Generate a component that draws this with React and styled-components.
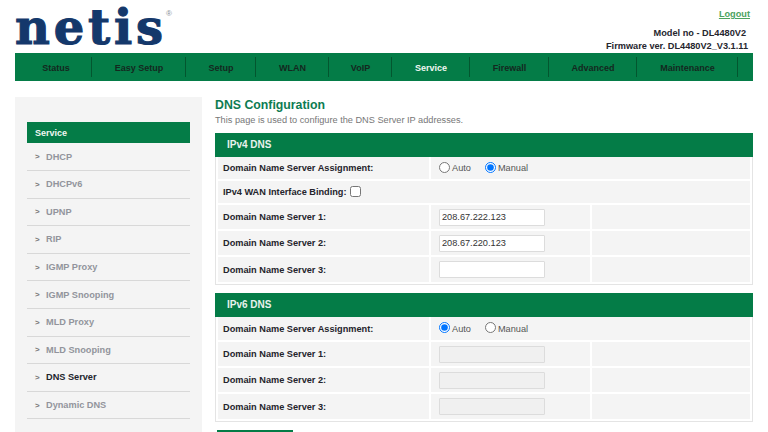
import React from 'react'
import styled, { createGlobalStyle } from 'styled-components'

const GlobalStyle = createGlobalStyle`
  html, body {
    margin: 0;
    height: 432px;
    overflow: hidden;
    background: #fff;
    font-family: 'Liberation Sans', Arial, sans-serif;
  }
`
const Page = styled.div`
  width: 768px;
  height: 432px;
  overflow: hidden;
  box-sizing: border-box;
  padding: 0 15px;
`
const Header = styled.header`
  height: 53px;
  display: flex;
  justify-content: space-between;
`
const Logo = styled.div`
  display: flex;
  align-items: flex-start;
  height: 53px;
`
const LogoText = styled.span`
  font-family: 'DejaVu Serif', serif;
  font-weight: 700;
  font-size: 48px;
  line-height: 53px;
  padding-top: 1px;
  letter-spacing: 3.8px;
  color: #14386b;
  -webkit-text-stroke: 1.1px #14386b;
`
const LogoMark = styled.span`
  font-size: 8px;
  line-height: 9px;
  color: #8a8f98;
  margin: 9px 0 0 -1px;
`
const HeaderInfo = styled.div`
  display: flex;
  flex-direction: column;
  align-items: flex-end;
  padding-right: 5px;
`
const LogoutLink = styled.a`
  font-size: 9.2px;
  font-weight: 700;
  line-height: 12px;
  color: #4ca35f;
  text-decoration: underline;
  margin-top: 8px;
  margin-bottom: 7px;
  margin-right: -2px;
`
const InfoLine = styled.div`
  font-size: 9.2px;
  font-weight: 700;
  line-height: 12.5px;
  color: #26262e;
  padding-right: ${p => p.$inset || 0}px;
`
const Nav = styled.nav`
  height: 28px;
  box-sizing: border-box;
  background: #047c47;
  padding: 4px 0 4px 5px;
  display: grid;
  grid-template-columns: 72px 94px 70px 73px 63px 78px 79px 88px 101px;
`
const NavItem = styled.a`
  display: flex;
  align-items: center;
  justify-content: center;
  padding: 1px 0 0 1px;
  font-size: 9px;
  font-weight: 700;
  color: ${p => (p.$active ? '#f2f7f2' : '#14281f')};
  border-right: 1px solid #03562f;
`
const Body = styled.div`
  display: flex;
  margin-top: 16px;
  gap: 13px;
`
const Sidebar = styled.aside`
  width: 187px;
  height: 340px;
  flex: none;
  box-sizing: border-box;
  background: #f4f4f4;
  padding: 25px 12px 0;
`
const SideTitle = styled.div`
  height: 21px;
  background: #047c47;
  color: #f2f7f2;
  font-size: 9px;
  font-weight: 700;
  line-height: 22px;
  padding-left: 8px;
`
const SideItem = styled.a`
  display: flex;
  align-items: center;
  box-sizing: border-box;
  height: ${p => (p.$first ? 28 : 27.6)}px;
  padding-left: 8px;
  font-size: 9.2px;
  font-weight: 700;
  color: ${p => (p.$active ? '#22242c' : '#92949c')};
  border-bottom: 1px solid #d8d8d8;
`
const Chevron = styled.span`
  width: 11px;
  font-size: 8px;
  color: #777;
`
const Main = styled.main`
  width: 538px;
  flex: none;
  padding-top: 1px;
`
const Title = styled.h1`
  margin: 0;
  font-size: 12.3px;
  line-height: 14px;
  font-weight: 700;
  color: #0d7c52;
`
const Description = styled.p`
  margin: 2px 0 7px;
  font-size: 9.2px;
  line-height: 12px;
  color: #777;
`
const PanelHead = styled.div`
  height: 24px;
  background: #047c47;
  color: #e8f2ec;
  font-size: 10px;
  font-weight: 700;
  line-height: 24px;
  padding-left: 12px;
`
const Panel = styled.section`
  margin-bottom: 8px;
`
const PanelBody = styled.div`
  box-sizing: border-box;
  border: 1px solid #e4e4e4;
  border-top: 0;
  padding: 0 2px 2px;
  display: flex;
  flex-direction: column;
  gap: 2px;
`
const Row = styled.div`
  display: grid;
  grid-template-columns: ${p => (p.$wide ? '1fr' : p.$split ? '211px 1fr' : '211px 159px 1fr')};
  column-gap: 2px;
  height: ${p => p.$h}px;
`
const Cell = styled.div`
  display: flex;
  align-items: center;
  background: #f4f4f4;
  padding-left: ${p => p.$pad || 5}px;
  font-size: 9.2px;
  color: #24242c;
`
const Label = styled.label`
  font-weight: 700;
`
const RadioLabel = styled.label`
  display: flex;
  align-items: center;
  margin-right: 14px;
  color: #555;
`
const Radio = styled.input.attrs({ type: 'radio', readOnly: true })`
  width: 11px;
  height: 11px;
  margin: 0 2px 2px 0;
`
const Check = styled.input.attrs({ type: 'checkbox', readOnly: true })`
  width: 11px;
  height: 11px;
  margin: 0 0 2px 3px;
`
const Field = styled.input.attrs({ type: 'text', readOnly: true })`
  box-sizing: border-box;
  width: 106px;
  height: 17px;
  border: 1px solid #dcdcdc;
  border-radius: 1px;
  padding: 0 2px;
  background: ${p => (p.disabled ? '#f0f0f0' : '#fff')};
  font-family: 'Liberation Sans', Arial, sans-serif;
  font-size: 9.2px;
  color: #333;
`
const SaveButton = styled.button`
  display: block;
  width: 76px;
  height: 22px;
  margin-left: 2px;
  border: 0;
  background: #047c47;
`

const navItems = ['Status', 'Easy Setup', 'Setup', 'WLAN', 'VoIP', 'Service', 'Firewall', 'Advanced', 'Maintenance']
const sideItems = ['DHCP', 'DHCPv6', 'UPNP', 'RIP', 'IGMP Proxy', 'IGMP Snooping', 'MLD Proxy', 'MLD Snooping', 'DNS Server', 'Dynamic DNS']

const Assignment = ({ name, mode, h }) => (
  <Row $split $h={h}>
    <Cell>
      <Label>Domain Name Server Assignment:</Label>
    </Cell>
    <Cell $pad={8}>
      <RadioLabel>
        <Radio name={name} defaultChecked={mode === 'auto'} />
        Auto
      </RadioLabel>
      <RadioLabel>
        <Radio name={name} defaultChecked={mode === 'manual'} />
        Manual
      </RadioLabel>
    </Cell>
  </Row>
)

const ServerRow = ({ n, value, disabled, h }) => (
  <Row $h={h}>
    <Cell>
      <Label>Domain Name Server {n}:</Label>
    </Cell>
    <Cell $pad={8}>
      <Field defaultValue={value} disabled={disabled} />
    </Cell>
    <Cell />
  </Row>
)

export default function App() {
  return (
    <Page>
      <GlobalStyle />
      <Header>
        <Logo>
          <LogoText>netis</LogoText>
          <LogoMark>®</LogoMark>
        </Logo>
        <HeaderInfo>
          <LogoutLink>Logout</LogoutLink>
          <InfoLine $inset={2}>Model no - DL4480V2</InfoLine>
          <InfoLine>Firmware ver. DL4480V2_V3.1.11</InfoLine>
        </HeaderInfo>
      </Header>
      <Nav>
        {navItems.map(item => (
          <NavItem key={item} $active={item === 'Service'}>{item}</NavItem>
        ))}
      </Nav>
      <Body>
        <Sidebar>
          <SideTitle>Service</SideTitle>
          {sideItems.map((item, i) => (
            <SideItem key={item} $first={i === 0} $active={item === 'DNS Server'}>
              <Chevron>&gt;</Chevron>
              {item}
            </SideItem>
          ))}
        </Sidebar>
        <Main>
          <Title>DNS Configuration</Title>
          <Description>This page is used to configure the DNS Server IP addresses.</Description>
          <Panel>
            <PanelHead>IPv4 DNS</PanelHead>
            <PanelBody>
              <Assignment name="v4" mode="manual" h={22} />
              <Row $wide $h={22}>
                <Cell>
                  <Label>IPv4 WAN Interface Binding:</Label>
                  <Check />
                </Cell>
              </Row>
              <ServerRow n={1} value="208.67.222.123" h={24} />
              <ServerRow n={2} value="208.67.220.123" h={24} />
              <ServerRow n={3} value="" h={25} />
            </PanelBody>
          </Panel>
          <Panel>
            <PanelHead>IPv6 DNS</PanelHead>
            <PanelBody>
              <Assignment name="v6" mode="auto" h={23} />
              <ServerRow n={1} disabled value="" h={24} />
              <ServerRow n={2} disabled value="" h={24} />
              <ServerRow n={3} disabled value="" h={25} />
            </PanelBody>
          </Panel>
          <SaveButton />
        </Main>
      </Body>
    </Page>
  )
}
